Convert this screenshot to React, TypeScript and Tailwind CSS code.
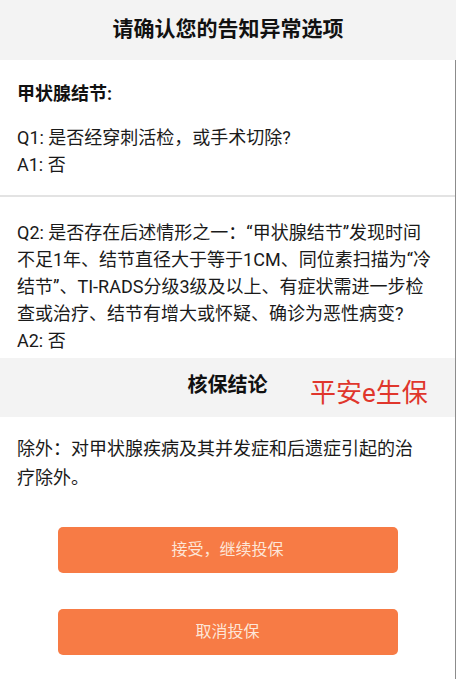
import React from "react";

const font = { fontFamily: "Roboto, 'Noto Sans CJK SC', 'Noto Sans', sans-serif" };

export default function App() {
  return (
    <div
      className="relative w-[456px] min-h-[679px] bg-white text-[#1a1a1a] overflow-hidden"
      style={font}
    >
      {/* header */}
      <div className="h-[60px] bg-[#f3f3f3] flex items-center justify-center">
        <h1 className="text-[21px] font-bold text-[#111]">请确认您的告知异常选项</h1>
      </div>

      <div className="border-r border-[#8c8c8c]">
        {/* Q1 block */}
        <div className="px-[17px] pt-[20px] pb-[17px] text-[18px] leading-[27px]">
          <div className="font-bold text-[#111]">甲状腺结节:</div>
          <div className="mt-[17px]">Q1: 是否经穿刺活检，或手术切除?</div>
          <div>A1: 否</div>
        </div>

        <div className="h-[2px] bg-[#e3e3e3]" />

        {/* Q2 block */}
        <div className="px-[17px] pt-[22px] pb-[4px] text-[18px] leading-[27px]">
          <div>
            Q2: 是否存在后述情形之一：“甲状腺结节”发现时间不足1年、结节直径大于等于1CM、同位素扫描为“冷结节”、TI-RADS分级3级及以上、有症状需进一步检查或治疗、结节有增大或怀疑、确诊为恶性病变?
          </div>
          <div>A2: 否</div>
        </div>

        {/* conclusion header */}
        <div className="relative h-[59px] bg-[#f3f3f3] flex items-center justify-center">
          <h2 className="text-[20px] font-bold text-[#111] -mt-[5px]">核保结论</h2>
          <span className="absolute left-[310px] top-[22px] text-[26px] leading-none text-[#e0362c]">
            平安e生保
          </span>
        </div>

        {/* conclusion body */}
        <div className="px-[17px] pt-[17px] text-[18px] leading-[29px]">
          除外：对甲状腺疾病及其并发症和后遗症引起的治
          <br />
          疗除外。
        </div>

        {/* actions */}
        <div className="flex flex-col items-center gap-[36px] pt-[35px] pb-[24px]">
          <button className="w-[340px] h-[46px] rounded-[5px] bg-[#f77b45] text-[16px] text-[#fde6d8]">
            接受，继续投保
          </button>
          <button className="w-[340px] h-[46px] rounded-[5px] bg-[#f77b45] text-[16px] text-[#fde6d8]">
            取消投保
          </button>
        </div>
      </div>
    </div>
  );
}
